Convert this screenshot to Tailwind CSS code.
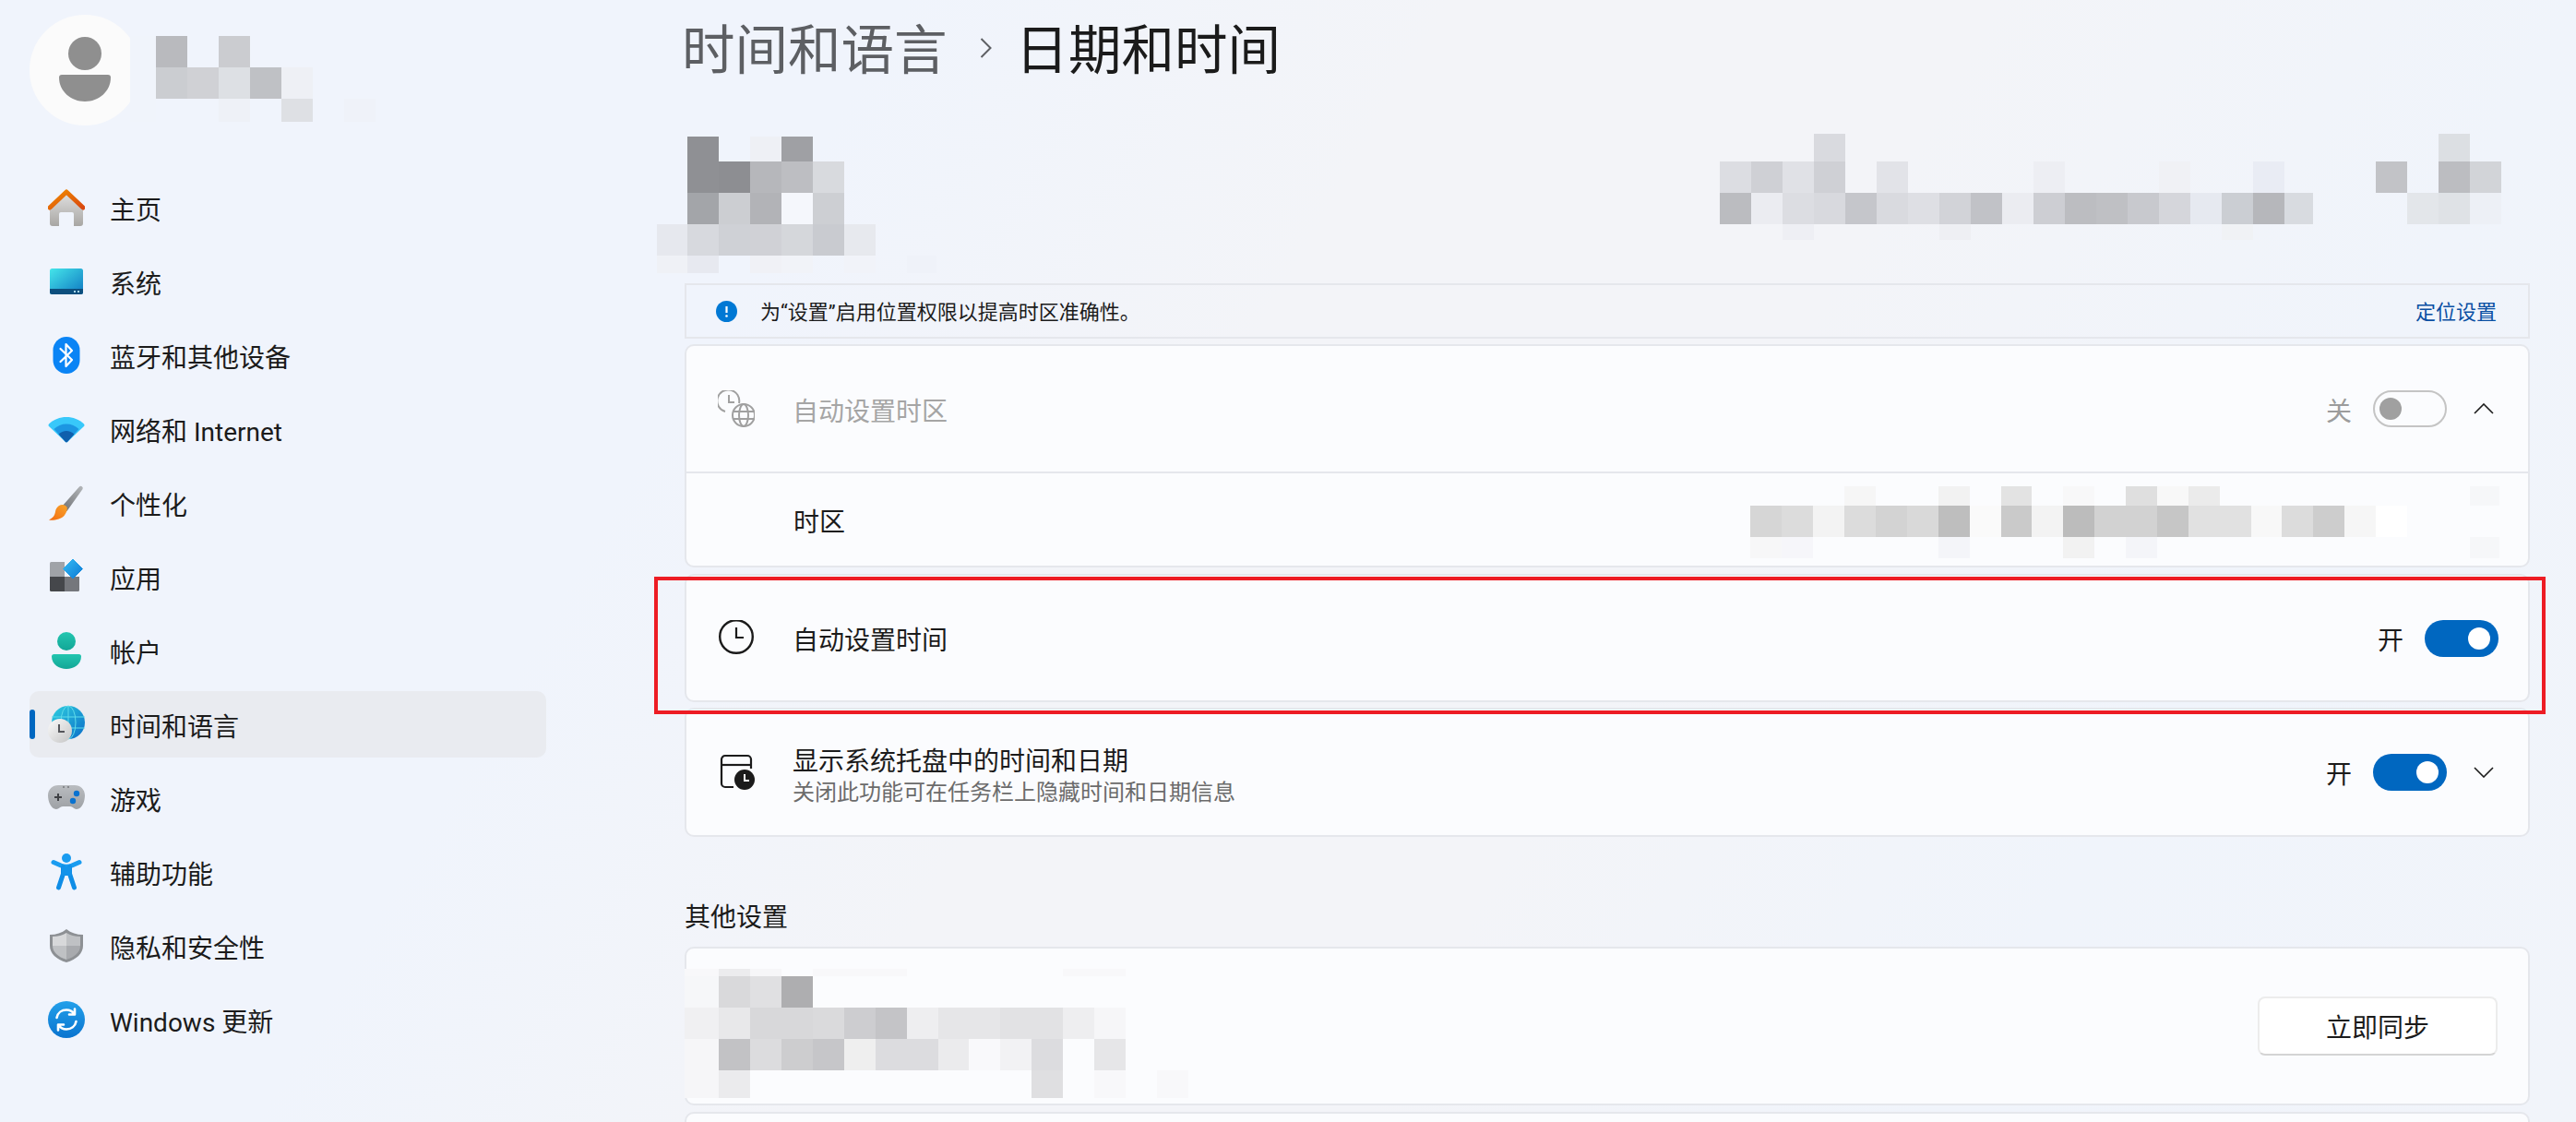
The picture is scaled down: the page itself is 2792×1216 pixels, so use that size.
<!DOCTYPE html>
<html lang="zh-CN">
<head>
<meta charset="utf-8">
<title>日期和时间</title>
<script src="https://cdn.jsdelivr.net/npm/@tailwindcss/browser@4"></script>
</head>
<body class="m-0">
<div class="relative flex w-[2792px] h-[1216px] overflow-hidden bg-[#f1f4fa] bg-[linear-gradient(120deg,#f0f4fc_0%,#f0f4fc_28%,#f3f4f8_45%,#f3f4f8_62%,#f0f4fb_80%,#f1f4fa_100%)] text-[#1b1b1b] text-[28px] leading-[36px] font-['Roboto','Noto_Sans_CJK_SC',sans-serif]">

  <!-- Sidebar -->
  <aside class="w-[742px] shrink-0 pl-[32px]">
    <div class="flex items-center h-[120px] mt-[16px]">
      <div class="flex items-center justify-center w-[120px] h-[120px] rounded-full bg-[#fbfbfb]">
        <svg width="60" height="72" viewBox="0 0 60 72"><ellipse cx="30" cy="18" rx="18" ry="18" fill="#8f8f8f"/><path d="M2 44a3 3 0 0 1 3-3h50a3 3 0 0 1 3 3c0 15-13 26-28 26S2 59 2 44z" fill="#8f8f8f"/></svg>
      </div>
    </div>
    <nav class="mt-[49px] flex flex-col w-[560px]">
      <a class="flex items-center gap-[27px] h-[80px] pl-[20px]">
        <svg class="w-[40px] h-[40px] shrink-0" viewBox="0 0 40 40"><defs><linearGradient id="h1" x1="0" y1="0" x2="0" y2="1"><stop offset="0" stop-color="#e2e2e2"/><stop offset="1" stop-color="#a8a6a3"/></linearGradient><linearGradient id="h2" x1="0" y1="0" x2="1" y2="1"><stop offset="0" stop-color="#f08a00"/><stop offset="1" stop-color="#d9480f"/></linearGradient></defs><path d="M2 20 20 3l18 17v17a3 3 0 0 1-3 3h-7V27a2 2 0 0 0-2-2H14a2 2 0 0 0-2 2v13H5a3 3 0 0 1-3-3z" fill="url(#h1)"/><path d="M2 20 20 3l18 17" fill="none" stroke="url(#h2)" stroke-width="5" stroke-linecap="round" stroke-linejoin="round"/></svg>
        <span class="mt-[8px]">主页</span>
      </a>
      <a class="flex items-center gap-[27px] h-[80px] pl-[20px]">
        <svg class="w-[40px] h-[40px] shrink-0" viewBox="0 0 40 40"><defs><linearGradient id="s1" x1="0" y1="0" x2="1" y2="1"><stop offset="0" stop-color="#45e6ea"/><stop offset="1" stop-color="#0f78c2"/></linearGradient></defs><rect x="2" y="6" width="36" height="28" rx="2.5" fill="url(#s1)"/><path d="M2 28h36v3.500a2.500 2.500 0 0 1-2.500 2.500h-31A2.500 2.500 0 0 1 2 31.500z" fill="#0d4f7e"/><rect x="28" y="30" width="2" height="2" fill="#a9d6ea"/><rect x="32" y="30" width="2" height="2" fill="#a9d6ea"/></svg>
        <span class="mt-[8px]">系统</span>
      </a>
      <a class="flex items-center gap-[27px] h-[80px] pl-[20px]">
        <svg class="w-[40px] h-[40px] shrink-0" viewBox="0 0 40 40"><rect x="5.500" y="0" width="29" height="40" rx="14.500" fill="#0a84f5"/><path d="M13.500 13 26 25l-6.500 7V8L26 15 13.500 27" fill="none" stroke="#fff" stroke-width="2.200" stroke-linejoin="round" stroke-linecap="round"/></svg>
        <span class="mt-[8px]">蓝牙和其他设备</span>
      </a>
      <a class="flex items-center gap-[27px] h-[80px] pl-[20px]">
        <svg class="w-[40px] h-[40px] shrink-0" viewBox="0 0 40 40"><path d="M1 14.500C6 9.500 13 7 20 7s14 2.500 19 7.500a2 2 0 0 1 0 2.500L21 34a1.500 1.500 0 0 1-2 0L1 17a2 2 0 0 1 0-2.500z" fill="#38c8fa"/><path d="M6.500 20C10 16.500 15 14.500 20 14.500S30 16.500 33.500 20L21 33.500a1.500 1.500 0 0 1-2 0z" fill="#1c96e2"/><path d="M11.500 25.500C14 23.300 17 22 20 22s6 1.300 8.500 3.500L21 34a1.500 1.500 0 0 1-2 0z" fill="#0f5fad"/></svg>
        <span class="mt-[8px]">网络和 Internet</span>
      </a>
      <a class="flex items-center gap-[27px] h-[80px] pl-[20px]">
        <svg class="w-[40px] h-[40px] shrink-0" viewBox="0 0 40 40"><defs><linearGradient id="b1" x1="0" y1="1" x2="1" y2="0"><stop offset="0" stop-color="#6e7074"/><stop offset="1" stop-color="#b4b7ba"/></linearGradient><linearGradient id="b2" x1="0" y1="1" x2="1" y2="0"><stop offset="0" stop-color="#f26b10"/><stop offset="1" stop-color="#f9a52c"/></linearGradient></defs><path d="M15 24 34 2.500a2.200 2.200 0 0 1 3.600 2.400L20.500 29z" fill="url(#b1)"/><path d="M12 23c3-2 7-1 8.500 1.500 1 2-.5 6.500-3 9.500C14.500 37.500 6 39.500 1 38.500 6 36 7.500 33 8 29.500c.3-3 2-5 4-6.500z" fill="url(#b2)"/></svg>
        <span class="mt-[8px]">个性化</span>
      </a>
      <a class="flex items-center gap-[27px] h-[80px] pl-[20px]">
        <svg class="w-[40px] h-[40px] shrink-0" viewBox="0 0 40 40"><defs><linearGradient id="a1" x1="0" y1="0" x2="1" y2="1"><stop offset="0" stop-color="#36bdf5"/><stop offset="1" stop-color="#0b78d4"/></linearGradient></defs><path d="M3.500 4H18v16H2V5.500A1.500 1.500 0 0 1 3.500 4z" fill="#a0a3a8"/><path d="M2 20h16v16H3.500A1.500 1.500 0 0 1 2 34.500z" fill="#45474b"/><path d="M18 20h16v14.500a1.500 1.500 0 0 1-1.500 1.500H18z" fill="#75777c"/><path d="M27 1l10.500 10.500L27 22 16.500 11.500z" fill="url(#a1)" stroke="url(#a1)" stroke-width="1" stroke-linejoin="round"/></svg>
        <span class="mt-[8px]">应用</span>
      </a>
      <a class="flex items-center gap-[27px] h-[80px] pl-[20px]">
        <svg class="w-[40px] h-[40px] shrink-0" viewBox="0 0 40 40"><defs><linearGradient id="u1" x1="0" y1="0" x2="0" y2="1"><stop offset="0" stop-color="#23c6b0"/><stop offset="1" stop-color="#12a696"/></linearGradient></defs><ellipse cx="20" cy="10" rx="10" ry="10" fill="url(#u1)"/><path d="M4 26.500A2.500 2.500 0 0 1 6.500 24h27a2.500 2.500 0 0 1 2.500 2.500C36 35 28 40 20 40S4 35 4 26.500z" fill="url(#u1)"/></svg>
        <span class="mt-[8px]">帐户</span>
      </a>
      <a class="relative flex items-center gap-[27px] h-[72px] my-[4px] pl-[20px] rounded-[10px] bg-[#e9ebf0]">
        <span class="absolute left-0 top-[20px] w-[6px] h-[32px] rounded-full bg-[#0067c0]"></span>
        <svg class="w-[40px] h-[40px] shrink-0 overflow-visible" viewBox="0 0 40 40"><defs><linearGradient id="t1" x1="0" y1="0" x2="1" y2="1"><stop offset="0" stop-color="#2fd0e0"/><stop offset="1" stop-color="#0a6cc8"/></linearGradient><linearGradient id="t2" x1="0" y1="0" x2="1" y2="1"><stop offset="0" stop-color="#fbfbfb"/><stop offset="1" stop-color="#c4c4c4"/></linearGradient></defs><circle cx="22" cy="18" r="18" fill="url(#t1)"/><g fill="none" stroke="#5fdcea" stroke-width="1"><ellipse cx="22" cy="18" rx="8" ry="18"/><path d="M4 12h36M4 24h36M22 0v36"/></g><circle cx="13" cy="27" r="13" fill="url(#t2)"/><path d="M12 20v8h6" fill="none" stroke="#55565a" stroke-width="2"/></svg>
        <span class="mt-[8px]">时间和语言</span>
      </a>
      <a class="flex items-center gap-[27px] h-[80px] pl-[20px]">
        <svg class="w-[40px] h-[40px] shrink-0" viewBox="0 0 40 40"><defs><linearGradient id="g1" x1="0" y1="0" x2="0" y2="1"><stop offset="0" stop-color="#b9bcc0"/><stop offset="1" stop-color="#9ea1a5"/></linearGradient></defs><path d="M11 6h18c6 0 11 4.500 11 11 0 6-3 15-9 15-3 0-4-3-7-3h-8c-3 0-4 3-7 3-6 0-9-9-9-15C0 10.500 5 6 11 6z" fill="url(#g1)"/><path d="M11 15v8M7 19h8" stroke="#3f4145" stroke-width="2"/><circle cx="31" cy="15" r="3.200" fill="#0a72d0"/><circle cx="27" cy="23" r="3.200" fill="#0a72d0"/><path d="M16 8h2M21 8h2" stroke="#55575b" stroke-width="1"/></svg>
        <span class="mt-[8px]">游戏</span>
      </a>
      <a class="flex items-center gap-[27px] h-[80px] pl-[20px]">
        <svg class="w-[40px] h-[40px] shrink-0" viewBox="0 0 40 40"><circle cx="20" cy="5" r="5" fill="#1a9cf0"/><path d="M6 9.500l8 3.500c4 1.600 8 1.600 12 0l8-3.500" fill="none" stroke="#1a9cf0" stroke-width="5" stroke-linecap="round" stroke-linejoin="round"/><path d="M16.500 15v7L11.500 37M23.500 15v7L28.500 37" fill="none" stroke="#0f8de6" stroke-width="5" stroke-linecap="round" stroke-linejoin="round"/><path d="M15 14h10v10H15z" fill="#1393ea"/></svg>
        <span class="mt-[8px]">辅助功能</span>
      </a>
      <a class="flex items-center gap-[27px] h-[80px] pl-[20px]">
        <svg class="w-[40px] h-[40px] shrink-0" viewBox="0 0 40 40"><path d="M20 2C25 6 31 8 38 8v12c0 8-7 15-18 18C9 35 2 28 2 20V8c7 0 13-2 18-6z" fill="#8d9094"/><path d="M20 6v14H5V10c6 0 11-1.500 15-4z" fill="#d7d8da"/><path d="M20 6c4 2.500 9 4 15 4v10H20z" fill="#bfc1c4"/><path d="M5 20h15v15C11 32 5 27 5 20z" fill="#bfc1c4"/><path d="M20 20h15c0 7-6 12-15 15z" fill="#a8aaae"/></svg>
        <span class="mt-[8px]">隐私和安全性</span>
      </a>
      <a class="flex items-center gap-[27px] h-[80px] pl-[20px]">
        <svg class="w-[40px] h-[40px] shrink-0" viewBox="0 0 40 40"><defs><linearGradient id="w1" x1="0" y1="0" x2="0" y2="1"><stop offset="0" stop-color="#23a0ea"/><stop offset="1" stop-color="#0a74cf"/></linearGradient></defs><circle cx="20" cy="20" r="20" fill="url(#w1)"/><path d="M9.500 18c1-5.500 5.500-8.500 10.500-8.500 3.500 0 6.500 1.500 8.500 4.500M29 8.500v6h-6M30.500 22c-1 5.500-5.500 8.500-10.500 8.500-3.500 0-6.500-1.500-8.500-4.500M11 31.500v-6h6" fill="none" stroke="#fff" stroke-width="2.600" stroke-linecap="round" stroke-linejoin="round"/></svg>
        <span class="mt-[8px]">Windows 更新</span>
      </a>
    </nav>
  </aside>

  <!-- Main -->
  <main class="w-[2000px] shrink-0">
    <header class="flex items-center h-[104px] text-[57.5px] leading-[72px]">
      <span class="text-[#5d5f63] -ml-[3px] mt-[7px]">时间和语言</span>
      <svg class="ml-[35px] mr-[26px]" width="13" height="22" viewBox="0 0 13 22"><path d="M1.500 1 11.500 11l-10 10" fill="none" stroke="#5d5f63" stroke-width="2"/></svg>
      <span class="mt-[7px]">日期和时间</span>
    </header>

    <section class="mt-[203px] flex items-center justify-between h-[60px] pl-[32px] pr-[34px] border-2 border-[#e5e7ec] text-[22px] leading-[30px]">
      <div class="flex items-center gap-[25px]">
        <svg width="23" height="23" viewBox="0 0 23 23"><circle cx="11.500" cy="11.500" r="11.500" fill="#0078d4"/><path d="M11.500 6v7" stroke="#fff" stroke-width="2.200"/><circle cx="11.500" cy="16.500" r="1.300" fill="#fff"/></svg>
        <span class="mt-[4px]">为“设置”启用位置权限以提高时区准确性。</span>
      </div>
      <a class="text-[#0a4fa3] mt-[4px]">定位设置</a>
    </section>

    <section class="mt-[6px] h-[242px] rounded-[10px] border-2 border-[#e5e7ec] bg-[#fbfcfe]">
      <div class="flex items-center h-[136px] pl-[34px] pr-[32px]">
        <svg class="w-[40px] h-[40px] shrink-0" viewBox="0 0 40 40"><g fill="none" stroke="#a0a0a0" stroke-width="2"><path d="M23 14A12 12 0 1 0 8 23"/><path d="M12 5v8h6"/><circle cx="28" cy="27" r="12"/><ellipse cx="28" cy="27" rx="5" ry="12"/><path d="M16 23h24M16 31h24"/></g></svg>
        <span class="ml-[41px] mt-[8px] text-[#a5a5a5]">自动设置时区</span>
        <span class="ml-auto mt-[8px] text-[#9c9c9c]">关</span>
        <span class="ml-[23px] flex items-center w-[80px] h-[40px] rounded-full border-2 border-[#c4c4c4] pl-[5px]"><span class="w-[24px] h-[24px] rounded-full bg-[#a0a0a0]"></span></span>
        <svg class="ml-[29px] mr-[5px]" width="22" height="12" viewBox="0 0 22 12"><path d="M1 11 11 1l10 10" fill="none" stroke="#1b1b1b" stroke-width="1.600"/></svg>
      </div>
      <div class="flex items-center h-[100px] pl-[116px] pt-[10px] border-t-2 border-[#e5e7ec]">时区</div>
    </section>

    <section class="mt-[7px] flex items-center h-[139px] pl-[34px] pr-[32px] rounded-[10px] border-2 border-[#e5e7ec] bg-[#fbfcfe]">
      <svg class="w-[40px] h-[40px] shrink-0" viewBox="0 0 40 40"><circle cx="20" cy="18" r="17.800" fill="none" stroke="#1b1b1b" stroke-width="2.400"/><path d="M20 8v11h8" fill="none" stroke="#1b1b1b" stroke-width="2.200"/></svg>
      <span class="ml-[41px] mt-[6px]">自动设置时间</span>
      <span class="ml-auto mt-[6px]">开</span>
      <span class="ml-[23px] flex items-center justify-end w-[80px] h-[40px] rounded-full bg-[#0067c0] pr-[9px]"><span class="w-[24px] h-[24px] rounded-full bg-white"></span></span>
    </section>

    <section class="mt-[6px] flex items-center h-[140px] pl-[34px] pr-[32px] rounded-[10px] border-2 border-[#e5e7ec] bg-[#fbfcfe]">
      <svg class="w-[40px] h-[40px] shrink-0" viewBox="0 0 40 40"><g fill="none" stroke="#1b1b1b" stroke-width="2.200"><path d="M17 36H8a4 4 0 0 1-4-4V6a4 4 0 0 1 4-4h24a4 4 0 0 1 4 4v10"/><path d="M4 12h32"/></g><circle cx="29" cy="28" r="11" fill="#1b1b1b"/><path d="M29 22v7h5" fill="none" stroke="#fff" stroke-width="2"/></svg>
      <div class="ml-[41px] mt-[8px] flex flex-col">
        <span class="leading-[36px]">显示系统托盘中的时间和日期</span>
        <span class="text-[24px] leading-[30px] text-[#6b6b6b]">关闭此功能可在任务栏上隐藏时间和日期信息</span>
      </div>
      <span class="ml-auto mt-[6px]">开</span>
      <span class="ml-[23px] flex items-center justify-end w-[80px] h-[40px] rounded-full bg-[#0067c0] pr-[9px]"><span class="w-[24px] h-[24px] rounded-full bg-white"></span></span>
      <svg class="ml-[29px] mr-[5px]" width="22" height="12" viewBox="0 0 22 12"><path d="M1 1l10 10L21 1" fill="none" stroke="#1b1b1b" stroke-width="1.600"/></svg>
    </section>

    <h2 class="mt-[70px] h-[36px] leading-[36px]">其他设置</h2>

    <section class="mt-[13px] flex items-center justify-end h-[172px] pr-[33px] rounded-[10px] border-2 border-[#e5e7ec] bg-[#fbfcfe]">
      <button class="w-[260px] h-[64px] pt-[6px] rounded-[8px] border-2 border-[#ececec] border-b-[#d4d4d4] bg-white">立即同步</button>
    </section>

    <section class="mt-[7px] h-[172px] rounded-[10px] border-2 border-[#e5e7ec] bg-[#fbfcfe]"></section>
  </main>

  <!-- Pixelated privacy blocks over the page -->
  <svg class="absolute left-0 top-0 pointer-events-none" width="2792" height="1216" viewBox="0 0 2792 1216" shape-rendering="crispEdges">
    <!-- account name -->
    <rect x="141" y="39" width="28" height="93" fill="#f0f4fb"/>
    <rect x="169" y="39" width="34" height="34" fill="#b9babe"/><rect x="237" y="39" width="34" height="34" fill="#cbccd0"/>
    <rect x="169" y="73" width="34" height="34" fill="#cbcdd1"/><rect x="203" y="73" width="34" height="34" fill="#d0d1d5"/><rect x="237" y="73" width="34" height="34" fill="#dde0e4"/><rect x="271" y="73" width="34" height="34" fill="#bfc1c5"/><rect x="305" y="73" width="34" height="34" fill="#eef0f5"/>
    <rect x="237" y="107" width="34" height="25" fill="#eef1f7"/><rect x="305" y="107" width="34" height="25" fill="#dee0e4"/><rect x="373" y="107" width="34" height="25" fill="#eff2f9"/>
    <!-- device name -->
    <rect x="745" y="148" width="34" height="27" fill="#8f9094"/><rect x="813" y="148" width="34" height="27" fill="#eef0f5"/><rect x="847" y="148" width="34" height="27" fill="#9fa0a4"/>
    <rect x="745" y="175" width="34" height="34" fill="#8f9094"/><rect x="779" y="175" width="34" height="34" fill="#8d8e92"/><rect x="813" y="175" width="34" height="34" fill="#b6b7bb"/><rect x="847" y="175" width="34" height="34" fill="#bdbec2"/><rect x="881" y="175" width="34" height="34" fill="#d8dade"/>
    <rect x="745" y="209" width="34" height="34" fill="#a3a5a9"/><rect x="779" y="209" width="34" height="34" fill="#ccced2"/><rect x="813" y="209" width="34" height="34" fill="#b2b3b7"/><rect x="847" y="209" width="34" height="34" fill="#f5f7fc"/><rect x="881" y="209" width="34" height="34" fill="#cdcfd3"/>
    <rect x="712" y="243" width="33" height="34" fill="#e6e8ee"/><rect x="745" y="243" width="34" height="34" fill="#d7d9de"/><rect x="779" y="243" width="34" height="34" fill="#cfd1d6"/><rect x="813" y="243" width="34" height="34" fill="#d0d1d6"/><rect x="847" y="243" width="34" height="34" fill="#d5d7db"/><rect x="881" y="243" width="34" height="34" fill="#c9cbd0"/><rect x="915" y="243" width="34" height="34" fill="#e7e9ee"/>
    <rect x="712" y="277" width="33" height="19" fill="#eff1f6"/><rect x="745" y="277" width="34" height="19" fill="#e7e9f0"/><rect x="813" y="277" width="34" height="19" fill="#f0f1f6"/><rect x="847" y="277" width="34" height="19" fill="#f1f3f8"/><rect x="915" y="277" width="34" height="19" fill="#f1f3f9"/><rect x="983" y="277" width="32" height="19" fill="#eff2f9"/>
    <!-- date text -->
    <rect x="1966" y="145" width="34" height="30" fill="#d9dadf"/><rect x="2643" y="145" width="34" height="30" fill="#dcdfe3"/>
    <rect x="1864" y="175" width="34" height="34" fill="#dcdde2"/><rect x="1898" y="175" width="34" height="34" fill="#cfd0d5"/><rect x="1932" y="175" width="34" height="34" fill="#e0e1e6"/><rect x="1966" y="175" width="34" height="34" fill="#cfd0d5"/><rect x="2034" y="175" width="34" height="34" fill="#e2e3e8"/><rect x="2204" y="175" width="34" height="34" fill="#edeef3"/><rect x="2340" y="175" width="34" height="34" fill="#f0f1f5"/><rect x="2442" y="175" width="34" height="34" fill="#e9ecf4"/><rect x="2575" y="175" width="34" height="34" fill="#c2c3c7"/><rect x="2643" y="175" width="34" height="34" fill="#bcbdc1"/><rect x="2677" y="175" width="34" height="34" fill="#d2d4d8"/>
    <rect x="1864" y="209" width="34" height="34" fill="#bbbcc0"/><rect x="1898" y="209" width="34" height="34" fill="#ebecf1"/><rect x="1932" y="209" width="34" height="34" fill="#dcdde2"/><rect x="1966" y="209" width="34" height="34" fill="#d8d9de"/><rect x="2000" y="209" width="34" height="34" fill="#c5c6cb"/><rect x="2034" y="209" width="34" height="34" fill="#d9dadf"/><rect x="2068" y="209" width="34" height="34" fill="#dedfe4"/><rect x="2102" y="209" width="34" height="34" fill="#d2d3d8"/><rect x="2136" y="209" width="34" height="34" fill="#c1c2c7"/><rect x="2170" y="209" width="34" height="34" fill="#ebecf1"/><rect x="2204" y="209" width="34" height="34" fill="#cdced3"/><rect x="2238" y="209" width="34" height="34" fill="#bcbdc1"/><rect x="2272" y="209" width="34" height="34" fill="#bfc0c4"/><rect x="2306" y="209" width="34" height="34" fill="#c8c9ce"/><rect x="2340" y="209" width="34" height="34" fill="#d5d6db"/><rect x="2374" y="209" width="34" height="34" fill="#e6e9f0"/><rect x="2408" y="209" width="34" height="34" fill="#cbced3"/><rect x="2442" y="209" width="34" height="34" fill="#b6b7bb"/><rect x="2476" y="209" width="31" height="34" fill="#d8dbe0"/><rect x="2609" y="209" width="34" height="34" fill="#e3e6ea"/><rect x="2643" y="209" width="34" height="34" fill="#dfe2e6"/><rect x="2677" y="209" width="34" height="34" fill="#edf0f6"/>
    <rect x="1932" y="243" width="34" height="17" fill="#eeeff4"/><rect x="2102" y="243" width="34" height="17" fill="#eeeff3"/><rect x="2408" y="243" width="34" height="17" fill="#f0f2f5"/>
    <!-- time zone value -->
    <rect x="1999" y="527" width="34" height="21" fill="#f6f6f6"/><rect x="2101" y="527" width="34" height="21" fill="#f2f2f2"/><rect x="2169" y="527" width="33" height="21" fill="#e3e3e3"/><rect x="2236" y="527" width="34" height="21" fill="#f8f8f9"/><rect x="2304" y="527" width="34" height="21" fill="#dfdfdf"/><rect x="2338" y="527" width="34" height="21" fill="#f8f8f8"/><rect x="2372" y="527" width="34" height="21" fill="#ebebeb"/><rect x="2677" y="527" width="32" height="21" fill="#f6f7f9"/>
    <rect x="1897" y="548" width="34" height="34" fill="#d6d6d6"/><rect x="1931" y="548" width="34" height="34" fill="#dcdcdc"/><rect x="1965" y="548" width="34" height="34" fill="#f3f3f3"/><rect x="1999" y="548" width="34" height="34" fill="#dcdcdc"/><rect x="2033" y="548" width="34" height="34" fill="#d3d3d3"/><rect x="2067" y="548" width="34" height="34" fill="#d9d9d9"/><rect x="2101" y="548" width="34" height="34" fill="#bebebe"/><rect x="2135" y="548" width="34" height="34" fill="#fafafa"/><rect x="2169" y="548" width="33" height="34" fill="#cacaca"/><rect x="2202" y="548" width="34" height="34" fill="#f3f3f3"/><rect x="2236" y="548" width="34" height="34" fill="#bcbcbc"/><rect x="2270" y="548" width="68" height="34" fill="#d2d2d2"/><rect x="2338" y="548" width="34" height="34" fill="#c6c6c6"/><rect x="2372" y="548" width="68" height="34" fill="#e1e1e1"/><rect x="2440" y="548" width="33" height="34" fill="#f8f8f8"/><rect x="2473" y="548" width="34" height="34" fill="#dcdcdc"/><rect x="2507" y="548" width="34" height="34" fill="#cdcdcd"/><rect x="2541" y="548" width="34" height="34" fill="#f6f6f6"/><rect x="2575" y="548" width="34" height="34" fill="#ffffff"/>
    <rect x="1897" y="582" width="34" height="23" fill="#f7f7f8"/><rect x="1931" y="582" width="34" height="23" fill="#f6f6fa"/><rect x="2101" y="582" width="34" height="23" fill="#f4f5f9"/><rect x="2236" y="582" width="34" height="23" fill="#f2f2f2"/><rect x="2304" y="582" width="34" height="23" fill="#f4f5f9"/><rect x="2677" y="582" width="32" height="23" fill="#f6f7f9"/>
    <!-- sync status -->
    <rect x="779" y="1050" width="34" height="8" fill="#ececee"/><rect x="742" y="1050" width="37" height="8" fill="#f8f8fa"/><rect x="813" y="1050" width="34" height="8" fill="#f6f6f8"/><rect x="881" y="1050" width="102" height="8" fill="#f8f8fa"/><rect x="1152" y="1050" width="68" height="8" fill="#f8f8fa"/>
    <rect x="742" y="1058" width="37" height="34" fill="#f6f7f9"/><rect x="779" y="1058" width="34" height="34" fill="#d9d9db"/><rect x="813" y="1058" width="34" height="34" fill="#e0e0e2"/><rect x="847" y="1058" width="34" height="34" fill="#aeaeb0"/>
    <rect x="742" y="1092" width="37" height="34" fill="#f0f0f2"/><rect x="779" y="1092" width="34" height="34" fill="#e8e8ea"/><rect x="813" y="1092" width="34" height="34" fill="#d8d8da"/><rect x="847" y="1092" width="34" height="34" fill="#d8d8da"/><rect x="881" y="1092" width="34" height="34" fill="#dadadc"/><rect x="915" y="1092" width="34" height="34" fill="#cdcdd0"/><rect x="949" y="1092" width="34" height="34" fill="#c4c4c7"/><rect x="983" y="1092" width="34" height="34" fill="#eeeef0"/><rect x="1017" y="1092" width="67" height="34" fill="#e6e6e8"/><rect x="1084" y="1092" width="68" height="34" fill="#e2e2e4"/><rect x="1152" y="1092" width="34" height="34" fill="#eeeef0"/><rect x="1186" y="1092" width="34" height="34" fill="#f6f6f8"/>
    <rect x="742" y="1126" width="37" height="34" fill="#f6f6f8"/><rect x="779" y="1126" width="34" height="34" fill="#c2c2c5"/><rect x="813" y="1126" width="34" height="34" fill="#dcdcde"/><rect x="847" y="1126" width="34" height="34" fill="#cdcdcf"/><rect x="881" y="1126" width="34" height="34" fill="#c6c6c9"/><rect x="915" y="1126" width="34" height="34" fill="#efefef"/><rect x="949" y="1126" width="68" height="34" fill="#dcdcdf"/><rect x="1017" y="1126" width="33" height="34" fill="#ebebed"/><rect x="1050" y="1126" width="34" height="34" fill="#f9f9fb"/><rect x="1084" y="1126" width="34" height="34" fill="#f2f2f4"/><rect x="1118" y="1126" width="34" height="34" fill="#dcdcdf"/><rect x="1186" y="1126" width="34" height="34" fill="#e6e6e8"/>
    <rect x="742" y="1160" width="37" height="30" fill="#f6f6f8"/><rect x="779" y="1160" width="34" height="30" fill="#ebebed"/><rect x="1118" y="1160" width="34" height="30" fill="#dfdfe1"/><rect x="1186" y="1160" width="34" height="30" fill="#f8f8fa"/><rect x="1254" y="1160" width="34" height="30" fill="#f8f8fa"/>
  </svg>

  <!-- Red annotation -->
  <div class="absolute left-[709px] top-[625px] w-[2050px] h-[149px] border-[4px] border-[#ed1c24] pointer-events-none"></div>
</div>
</body>
</html>
